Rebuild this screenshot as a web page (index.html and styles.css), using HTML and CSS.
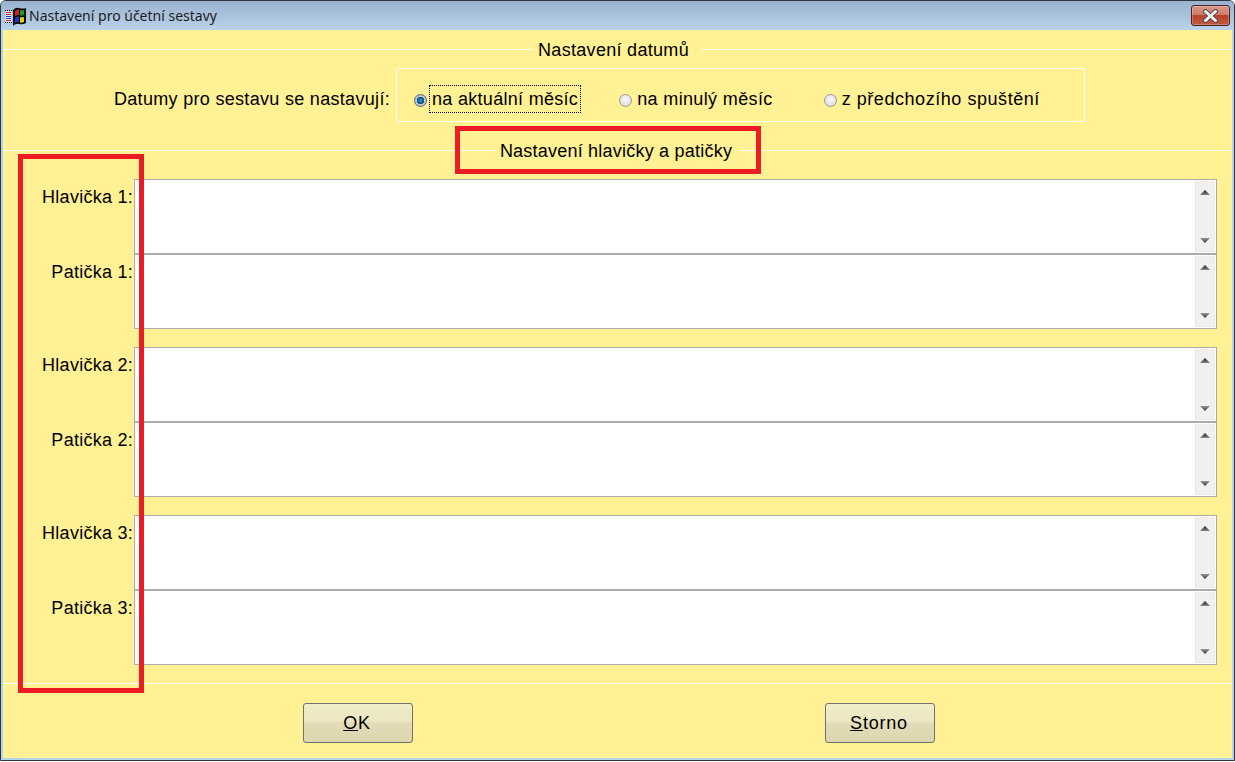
FILE: index.html
```html
<!DOCTYPE html>
<html lang="cs">
<head>
<meta charset="utf-8">
<title>Nastavení pro účetní sestavy</title>
<link rel="stylesheet" href="styles.css">
</head>
<body>
<div class="window">
  <header class="titlebar">
    <svg class="appicon" width="22" height="20" viewBox="0 0 22 20">
      <path d="M0 3.500h7M0 15.500h7" stroke="#111" stroke-width="1" stroke-dasharray="1 1"/>
      <rect x="0.500" y="4" width="6" height="11" fill="#e8eef8"/>
      <path d="M1 5.500h5M1 7.500h5" stroke="#d02020" stroke-width="1"/>
      <path d="M1 9.500h5M1 11.500h5" stroke="#2030d8" stroke-width="1"/>
      <path d="M1 13.500h5" stroke="#d02020" stroke-width="1"/>
      <path d="M8 3 Q11 0 14 1 Q18 2 21 1 L21 16 Q18 18 14 17 Q11 16 8 19z" fill="#0c0c0c"/>
      <path d="M10 4 Q12 2 14 2.500 V8 Q12 7.500 10 9z" fill="#d8201a"/>
      <path d="M15 3 Q17 3.500 19 3 V8 Q17 9 15 8.500z" fill="#14a02a"/>
      <path d="M10 10.500 Q12 9 14 9.500 V15 Q12 14.500 10 16z" fill="#2034d0"/>
      <path d="M15 10 Q17 10.500 19 10 V15 Q17 16 15 15.500z" fill="#e4d018"/>
    </svg>
    <span class="title">Nastavení pro účetní sestavy</span>
    <button class="close" aria-label="Zavřít">
      <svg width="17" height="14" viewBox="0 0 17 14"><path d="M3.500 2.500 L13.500 11.500 M13.500 2.500 L3.500 11.500" stroke="#5c4a50" stroke-width="5" stroke-linecap="round"/><path d="M3.500 2.500 L13.500 11.500 M13.500 2.500 L3.500 11.500" stroke="#f4f4f6" stroke-width="3" stroke-linecap="round"/></svg>
    </button>
  </header>
  <main class="client">
    <div class="heading first"><span>Nastavení datumů</span></div>
    <div class="dates">
      <span class="dates-label">Datumy pro sestavu se nastavují:</span>
      <div class="radios">
        <label class="option opt1"><span class="radio checked"></span><span class="focus">na aktuální měsíc</span></label>
        <label class="option opt2"><span class="radio"></span><span>na minulý měsíc</span></label>
        <label class="option opt3"><span class="radio"></span><span>z předchozího spuštění</span></label>
      </div>
    </div>
    <div class="heading second"><span>Nastavení hlavičky a patičky</span></div>
    <div class="fields">
      <div class="group">
        <div class="row"><span class="label">Hlavička 1:</span><div class="memo"><div class="scroll"><i class="up"></i><i class="down"></i></div></div></div>
        <div class="row"><span class="label">Patička 1:</span><div class="memo"><div class="scroll"><i class="up"></i><i class="down"></i></div></div></div>
      </div>
      <div class="group">
        <div class="row"><span class="label">Hlavička 2:</span><div class="memo"><div class="scroll"><i class="up"></i><i class="down"></i></div></div></div>
        <div class="row"><span class="label">Patička 2:</span><div class="memo"><div class="scroll"><i class="up"></i><i class="down"></i></div></div></div>
      </div>
      <div class="group">
        <div class="row"><span class="label">Hlavička 3:</span><div class="memo"><div class="scroll"><i class="up"></i><i class="down"></i></div></div></div>
        <div class="row"><span class="label">Patička 3:</span><div class="memo"><div class="scroll"><i class="up"></i><i class="down"></i></div></div></div>
      </div>
    </div>
    <div class="rule"></div>
    <div class="buttons">
      <button class="btn"><u>O</u>K</button>
      <button class="btn"><u>S</u>torno</button>
    </div>
  </main>
  <div class="mark mark-labels"></div>
  <div class="mark mark-heading"></div>
</div>
</body>
</html>
```

FILE: styles.css
```css
* { box-sizing: border-box; }
html, body { margin: 0; padding: 0; }
body { width: 1235px; height: 762px; overflow: hidden; background: #fff; }

.window {
  position: relative;
  width: 1235px;
  height: 761px;
  display: flex;
  flex-direction: column;
  border: 1px solid #2b3640;
  border-radius: 6px 6px 0 0;
  background: #b4d4ee;
  font-family: "Liberation Sans", Arial, sans-serif;
  font-size: 18px;
  letter-spacing: .3px;
  color: #000;
  overflow: hidden;
}

.titlebar {
  height: 29px;
  flex: none;
  display: flex;
  align-items: center;
  padding: 0 4px;
  background: linear-gradient(#9ab2ce, #bad2ea);
}
.appicon { flex: none; margin-right: 2px; margin-top: 2px; }
.title {
  font-family: "Noto Sans", "Open Sans", sans-serif;
  font-size: 14px;
  letter-spacing: 0;
  color: #1c1c1c;
}
.close {
  margin-left: auto;
  width: 39px;
  height: 21px;
  padding: 0;
  display: flex;
  align-items: center;
  justify-content: center;
  border: 1px solid #4a2028;
  border-radius: 3px;
  background: linear-gradient(#d99a88 0, #cf7a68 45%, #b8412c 50%, #c05a40 100%);
  box-shadow: inset 0 0 0 1px rgba(255,255,255,.25);
}

.client {
  flex: 1;
  margin: 0 2px 2px 2px;
  background: #fff194;
  display: flex;
  flex-direction: column;
  padding-top: 10px;
}

.heading {
  height: 18px;
  display: flex;
  align-items: center;
  line-height: 18px;
  white-space: nowrap;
}
.heading::before, .heading::after {
  content: "";
  flex: 1;
  height: 1px;
  background: #fff;
}
.heading span { padding: 2px 5px 0; }
.heading.first span { padding-right: 13px; }
.heading.second { margin-top: 19px; letter-spacing: .22px; }
.heading.second span { padding-right: 8px; }

.dates {
  margin-top: 10px;
  height: 54px;
  display: flex;
  align-items: center;
}
.dates-label {
  width: 387px;
  padding-top: 8px;
  text-align: right;
  white-space: nowrap;
  margin-right: 6px;
  letter-spacing: .31px;
}
.radios {
  width: 689px;
  height: 54px;
  padding-top: 8px;
  border: 1px solid #fff;
  border-radius: 2px;
  display: flex;
  align-items: center;
  white-space: nowrap;
}
.option { display: flex; align-items: center; }
.opt1 { margin-left: 17px; }
.opt2 { margin-left: 38px; letter-spacing: .36px; }
.opt3 { margin-left: 51px; letter-spacing: .55px; }
.radio {
  width: 13px;
  height: 13px;
  border-radius: 50%;
  border: 1px solid #9a9a9a;
  background: radial-gradient(circle at 50% 40%, #fafafa, #d4d4d4);
  margin-right: 5px;
  margin-top: 2px;
  flex: none;
}
.radio.checked {
  background: radial-gradient(circle, #2a9ad8 0, #0a4a80 45%, #c8ccd0 50%, #b0b4b8 100%);
  border-color: #5a6470;
}
.focus {
  outline: 1px dotted #000;
  height: 26px;
  line-height: 26px;
  padding: 0 2px;
  margin-left: -2px;
  margin-right: 1px;
}

.fields {
  margin-top: 20px;
  display: flex;
  flex-direction: column;
  gap: 18px;
}
.row { display: flex; height: 75px; }
.label {
  width: 130px;
  margin-right: 1px;
  padding-top: 9px;
  text-align: right;
  line-height: 18px;
  white-space: nowrap;
  letter-spacing: .26px;
}
.memo {
  width: 1083px;
  height: 75px;
  border: 1px solid #aaaab0;
  background: #fff;
  display: flex;
  justify-content: flex-end;
  padding: 1px;
}
.scroll {
  position: relative;
  width: 20px;
  background: #f0f0f0;
  border: 1px solid #ececec;
  border-left-color: #e4e4e4;
}
.scroll i {
  position: absolute;
  left: 4px;
  width: 10px;
  height: 5px;
}
.scroll .up {
  top: 8px;
  clip-path: polygon(50% 0, 100% 100%, 0 100%);
  background: linear-gradient(#222, #888);
}
.scroll .down {
  bottom: 8px;
  clip-path: polygon(0 0, 100% 0, 50% 100%);
  background: linear-gradient(#999, #333);
}

.rule { margin-top: 18px; height: 1px; background: #fff; flex: none; }

.buttons {
  margin-top: 19px;
  padding-left: 300px;
  display: flex;
  gap: 412px;
}
.btn {
  width: 110px;
  height: 40px;
  padding: 0 2px 0 0;
  font: inherit;
  letter-spacing: .8px;
  color: #000;
  border: 1px solid #707070;
  border-radius: 3px;
  background: linear-gradient(#f1ecc9 0, #ece7c2 46%, #e2ddb7 50%, #dcd7ae 100%);
}

.mark { position: absolute; border: 5px solid #ed1c24; }
.mark-labels { left: 17px; top: 153px; width: 126px; height: 539px; }
.mark-heading { left: 454px; top: 125px; width: 306px; height: 48px; }
```
